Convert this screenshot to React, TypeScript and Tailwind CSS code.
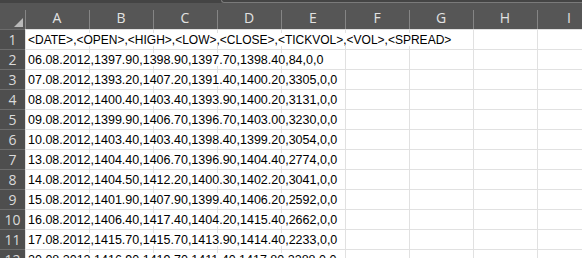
import React from 'react';

const columns = ['A', 'B', 'C', 'D', 'E', 'F', 'G', 'H', 'I'];

const rows: string[] = [
  '<DATE>,<OPEN>,<HIGH>,<LOW>,<CLOSE>,<TICKVOL>,<VOL>,<SPREAD>',
  '06.08.2012,1397.90,1398.90,1397.70,1398.40,84,0,0',
  '07.08.2012,1393.20,1407.20,1391.40,1400.20,3305,0,0',
  '08.08.2012,1400.40,1403.40,1393.90,1400.20,3131,0,0',
  '09.08.2012,1399.90,1406.70,1396.70,1403.00,3230,0,0',
  '10.08.2012,1403.40,1403.40,1398.40,1399.20,3054,0,0',
  '13.08.2012,1404.40,1406.70,1396.90,1404.40,2774,0,0',
  '14.08.2012,1404.50,1412.20,1400.30,1402.20,3041,0,0',
  '15.08.2012,1401.90,1407.90,1399.40,1406.20,2592,0,0',
  '16.08.2012,1406.40,1417.40,1404.20,1415.40,2662,0,0',
  '17.08.2012,1415.70,1415.70,1413.90,1414.40,2233,0,0',
  '20.08.2012,1416.90,1419.70,1411.40,1417.80,2288,0,0',
];

const App: React.FC = () => {
  return (
    <div className="w-[582px] h-[258px] overflow-hidden bg-white flex flex-col">
      {/* formula bar edge */}
      <div className="h-[3px] bg-[#444444] flex">
        <div className="ml-[221px] flex-1 h-[3px] border-b border-l border-[#7a7a7a] rounded-bl-[3px]" />
      </div>

      {/* column headers */}
      <div className="flex h-[26px] bg-[#565656] shrink-0">
        <div className="w-[25px] shrink-0 relative bg-[#565656]">
          <div className="absolute right-[2px] bottom-[2px] w-0 h-0 border-l-[9px] border-l-transparent border-b-[9px] border-b-[#b9b9b9]" />
        </div>
        {columns.map((col) => (
          <div key={col} className="w-[64px] shrink-0 relative flex items-end justify-center pb-[3px] text-[#e2e2e2] text-[14px] leading-none" style={{ fontFamily: '"Open Sans", sans-serif' }}>
            <div className="absolute left-0 top-[7px] bottom-0 w-px bg-[#858585]" />
            <span className="mb-[1px]">{col}</span>
          </div>
        ))}
      </div>

      {/* rows */}
      {rows.map((text, i) => (
        <div key={i} className="flex h-[20px] shrink-0">
          <div className="w-[25px] shrink-0 bg-[#4e4e4e] border-t border-[#6c6c6c] flex items-center justify-center text-[#dadada] text-[14px] leading-none" style={{ fontFamily: '"Open Sans", sans-serif' }}>
            {i + 1}
          </div>
          <div className="relative flex flex-1 border-t border-[#e1e1e1]">
            {columns.map((col) => (
              <div key={col} className="w-[64px] shrink-0 border-l border-[#e1e1e1]" />
            ))}
            <div
              className={`absolute inset-y-0 left-[1px] pl-[2px] flex items-center whitespace-nowrap text-black leading-none ${i === 0 ? 'text-[12px]' : 'text-[12.5px]'}`}
              style={{ fontFamily: '"Liberation Sans", Arial, sans-serif' }}
            >
              <span className="bg-white pr-[1px] pt-[1px]">{text}</span>
            </div>
          </div>
        </div>
      ))}
    </div>
  );
};

export default App;
